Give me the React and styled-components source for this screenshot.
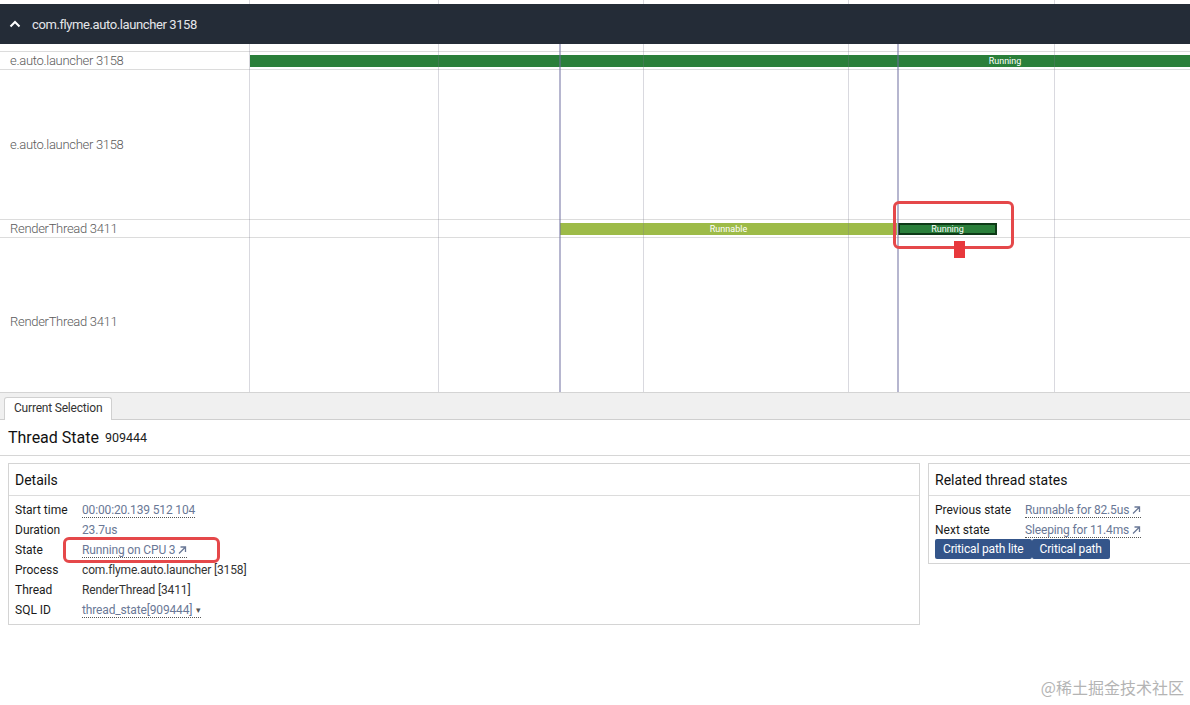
import React from 'react';
import styled, { createGlobalStyle } from 'styled-components';

const GlobalStyle = createGlobalStyle`
    html, body {
        margin: 0;
        padding: 0;
        background: #fff;
        overflow: hidden;
    }
    body {
        font-family: Roboto, "Noto Sans", sans-serif;
    }
    * {
        box-sizing: border-box;
    }
`;

const CANVAS_LEFT = 250;
const gridX = [438, 643, 848, 1054];
const cursorX = [560, 898];

const tracks = [
    { name: 'e.auto.launcher 3158', height: 18, slices: [{ x: 250, w: 1510, label: 'Running', kind: 'running' }] },
    { name: 'e.auto.launcher 3158', height: 150, slices: [] },
    {
        name: 'RenderThread 3411', height: 18, slices: [
            { x: 560, w: 337, label: 'Runnable', kind: 'runnable' },
            { x: 898, w: 99, label: 'Running', kind: 'selected' },
        ]
    },
    { name: 'RenderThread 3411', height: 168, slices: [] },
];

const details = [
    { label: 'Start time', value: '00:00:20.139 512 104', link: true },
    { label: 'Duration', value: '23.7us', link: true, plain: true },
    { label: 'State', value: 'Running on CPU 3', link: true, arrow: true },
    { label: 'Process', value: 'com.flyme.auto.launcher [3158]' },
    { label: 'Thread', value: 'RenderThread [3411]' },
    { label: 'SQL ID', value: 'thread_state[909444]', link: true, menu: true },
];

const related = [
    { label: 'Previous state', value: 'Runnable for 82.5us' },
    { label: 'Next state', value: 'Sleeping for 11.4ms' },
];

function GridLines({ withCursor }) {
    return (
        <Overlay>
            <Line style={{ left: 249 - CANVAS_LEFT + 1 }} />
            {gridX.map((x) => <Line key={x} style={{ left: x - CANVAS_LEFT + 1 }} />)}
            {withCursor && cursorX.map((x) => <Line key={x} $cursor style={{ left: x - CANVAS_LEFT }} />)}
        </Overlay>
    );
}

function Arrow() {
    return (
        <svg width="10" height="10" viewBox="0 0 10 10" style={{ marginLeft: 2 }}>
            <path d="M2 8.5 L8.5 2 M3.5 2 H8.5 V7" stroke="currentColor" strokeWidth="1.3" fill="none" />
        </svg>
    );
}

export default function App() {
    return (
        <Page>
            <GlobalStyle />
            <TopRuler>
                <GridLines />
            </TopRuler>
            <GroupHeader>
                <svg width="14" height="14" viewBox="0 0 14 14">
                    <path d="M2.5 9.5 L7 5 L11.5 9.5" stroke="#fff" strokeWidth="2" fill="none" />
                </svg>
                <span>com.flyme.auto.launcher 3158</span>
            </GroupHeader>
            <TrackArea>
                <Spacer />
                {tracks.map((t, i) => (
                    <Track key={i} $height={t.height}>
                        <TrackLabel>{t.name}</TrackLabel>
                        <Canvas>
                            {t.slices.map((s, j) => (
                                <Slice key={j} $kind={s.kind} style={{ left: s.x - CANVAS_LEFT, width: s.w }}>
                                    {s.label}
                                </Slice>
                            ))}
                        </Canvas>
                    </Track>
                ))}
                <GridLines withCursor />
            </TrackArea>

            <BottomPanel>
                <TabBar>
                    <Tab>Current Selection</Tab>
                </TabBar>
                <SelectionTitle>
                    Thread State <small>909444</small>
                </SelectionTitle>
                <Cards>
                    <Card $width={912}>
                        <CardTitle>Details</CardTitle>
                        <CardBody>
                            {details.map((d) => (
                                <Row key={d.label}>
                                    <RowLabel $w={67}>{d.label}</RowLabel>
                                    <Value $link={d.link}>
                                        {d.value}
                                        {d.arrow && <Arrow />}
                                        {d.menu && <Caret>▾</Caret>}
                                    </Value>
                                </Row>
                            ))}
                        </CardBody>
                    </Card>
                    <Card $width={264}>
                        <CardTitle>Related thread states</CardTitle>
                        <CardBody>
                            {related.map((r) => (
                                <Row key={r.label}>
                                    <RowLabel $w={90}>{r.label}</RowLabel>
                                    <Value $link>
                                        {r.value}
                                        <Arrow />
                                    </Value>
                                </Row>
                            ))}
                            <ButtonRow>
                                <PathButton>Critical path lite</PathButton>
                                <PathButton>Critical path</PathButton>
                            </ButtonRow>
                        </CardBody>
                    </Card>
                </Cards>
            </BottomPanel>

            <Highlight style={{ left: 893, top: 201, width: 121, height: 48 }} />
            <Marker />
            <Highlight style={{ left: 63, top: 537, width: 157, height: 26 }} />
            <Watermark>@稀土掘金技术社区</Watermark>
        </Page>
    );
}

const Page = styled.div`
    position: relative;
    width: 1190px;
    height: 705px;
    overflow: hidden;
    display: flex;
    flex-direction: column;
    background: #fff;
`;

const TopRuler = styled.div`
    position: relative;
    height: 4px;
    flex: none;
`;

const GroupHeader = styled.div`
    height: 40px;
    flex: none;
    background: #242c37;
    color: #e4e6ea;
    display: flex;
    align-items: center;
    gap: 10px;
    padding-left: 8px;
    font-size: 13px;
    span{
        letter-spacing: -0.4px;
    }
`;

const TrackArea = styled.div`
    position: relative;
    height: 348px;
    flex: none;
    display: flex;
    flex-direction: column;
    overflow: hidden;
`;

const Spacer = styled.div`
    height: 7px;
    flex: none;
`;

const Track = styled.div`
    height: ${(p) => p.$height}px;
    flex: none;
    display: flex;
    border-top: 1px solid #dcdcdc;
`;

const TrackLabel = styled.div`
    width: 250px;
    flex: none;
    display: flex;
    align-items: center;
    padding-left: 10px;
    font-size: 13px;
    font-weight: 300;
    color: #5a5a5a;
    letter-spacing: -0.3px;
`;

const Canvas = styled.div`
    position: relative;
    flex: 1;
`;

const sliceColors = {
    running: 'background: #2a7f3a;',
    runnable: 'background: #9dbb48;',
    selected: 'background: #2a7f3a; box-shadow: inset 0 0 0 2px #0e3a17;',
};

const Slice = styled.div`
    position: absolute;
    top: 3px;
    height: 12px;
    ${(p) => sliceColors[p.$kind]}
    color: #fff;
    font-size: 9px;
    line-height: 12px;
    text-align: center;
    white-space: nowrap;
    overflow: hidden;
`;

const Overlay = styled.div`
    position: absolute;
    top: 0;
    bottom: 0;
    left: ${CANVAS_LEFT}px;
    right: 0;
    pointer-events: none;
`;

const Line = styled.div`
    position: absolute;
    top: 0;
    bottom: 0;
    width: ${(p) => (p.$cursor ? 2 : 1)}px;
    margin-left: -1px;
    background: ${(p) => (p.$cursor ? 'rgba(110, 110, 160, 0.5)' : 'rgba(120, 120, 140, 0.28)')};
`;

const BottomPanel = styled.div`
    flex: 1;
    display: flex;
    flex-direction: column;
`;

const TabBar = styled.div`
    height: 28px;
    flex: none;
    background: #f0f0f0;
    border-top: 1px solid #d4d4d4;
    border-bottom: 1px solid #cfcfcf;
    display: flex;
    align-items: flex-end;
    padding-left: 4px;
`;

const Tab = styled.div`
    height: 23px;
    margin-bottom: -1px;
    padding: 0 9px 2px;
    background: #fff;
    border: 1px solid #d0d0d0;
    border-bottom: none;
    border-radius: 3px 3px 0 0;
    font-size: 12px;
    letter-spacing: -0.2px;
    color: #333;
    display: flex;
    align-items: center;
`;

const SelectionTitle = styled.div`
    height: 36px;
    flex: none;
    display: flex;
    align-items: center;
    gap: 6px;
    padding-left: 8px;
    font-size: 16px;
    color: #111;
    border-bottom: 1px solid #d6d6d6;
    small{
        font-size: 12.5px;
        color: #222;
    }
`;

const Cards = styled.div`
    display: flex;
    gap: 8px;
    padding: 7px 0 0 8px;
    align-items: flex-start;
`;

const Card = styled.div`
    border: 1px solid #d4d4d4;
    flex: 0 0 ${(p) => p.$width}px;
    padding-bottom: 4px;
`;

const CardTitle = styled.div`
    height: 32px;
    display: flex;
    align-items: center;
    padding-left: 6px;
    font-size: 14px;
    color: #111;
    border-bottom: 1px solid #dcdcdc;
`;

const CardBody = styled.div`
    padding: 4px 6px 0;
    display: flex;
    flex-direction: column;
`;

const Row = styled.div`
    height: 20px;
    display: flex;
    align-items: center;
    font-size: 12px;
`;

const RowLabel = styled.div`
    width: ${(p) => p.$w}px;
    flex: none;
    color: #1a1a1a;
`;

const Value = styled.div`
    display: flex;
    align-items: center;
    color: ${(p) => (p.$link ? '#6a7896' : '#333')};
    border-bottom: ${(p) => (p.$link ? '1px dotted #555' : 'none')};
    line-height: 14px;
    letter-spacing: -0.15px;
`;

const Caret = styled.span`
    font-size: 9px;
    margin-left: 4px;
    color: #555;
`;

const ButtonRow = styled.div`
    display: flex;
    margin-top: -1px;
`;

const PathButton = styled.button`
    height: 20px;
    border: none;
    border-radius: 2px;
    background: #34558a;
    color: #fff;
    font-family: Roboto, sans-serif;
    font-size: 12px;
    letter-spacing: -0.15px;
    padding: 0 8px;
`;

const Highlight = styled.div`
    position: absolute;
    border: 3px solid #e5484a;
    border-radius: 6px;
    pointer-events: none;
`;

const Marker = styled.div`
    position: absolute;
    left: 954px;
    top: 241px;
    width: 11px;
    height: 17px;
    background: #e8383c;
`;

const Watermark = styled.div`
    position: absolute;
    right: 6px;
    bottom: 6px;
    font-size: 16px;
    color: #b4b4b4;
    font-family: "Noto Sans CJK SC", sans-serif;
`;
